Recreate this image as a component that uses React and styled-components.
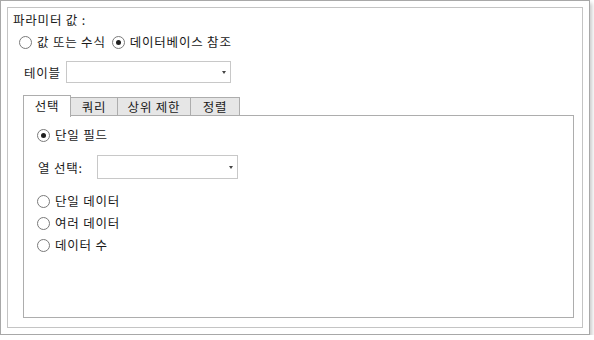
import styled, { createGlobalStyle } from "styled-components";

const GlobalStyle = createGlobalStyle`
  html, body {
    margin: 0;
    padding: 0;
    background: #ffffff;
  }
  body {
    font-family: "Noto Sans CJK KR", "Noto Sans", sans-serif;
    font-size: 12.5px;
    letter-spacing: 0.8px;
    color: #1a1a1a;
  }
  * {
    box-sizing: border-box;
  }
`;

const Window = styled.div`
  width: 590px;
  height: 335px;
  padding: 6px;
  background: #ffffff;
  border: 1px solid #a8a8a8;
  box-shadow: 2px 3px 4px rgba(0, 0, 0, 0.22);
`;

const Group = styled.div`
  height: 100%;
  display: flex;
  flex-direction: column;
  border: 1px solid #c4c4c4;
  padding: 4px 8px 9px 0;
`;

const Title = styled.div`
  height: 16px;
  line-height: 16px;
  margin-left: 5px;
`;

const Row = styled.div`
  display: flex;
  align-items: center;
  height: ${(p) => p.$h || 16}px;
  margin-top: ${(p) => p.$mt || 0}px;
  margin-left: ${(p) => p.$ml || 0}px;
  gap: ${(p) => p.$gap || 0}px;
`;

const RadioLabel = styled.label`
  display: flex;
  align-items: center;
  gap: 5px;
  height: 16px;
  line-height: 16px;
  white-space: nowrap;
`;

const Circle = styled.span`
  position: relative;
  width: 13px;
  height: 13px;
  border-radius: 50%;
  border: 1px solid #7a7a7a;
  background: #ffffff;
  flex: none;

  &::after {
    content: "";
    display: ${(p) => (p.$checked ? "block" : "none")};
    position: absolute;
    left: 3px;
    top: 3px;
    width: 5px;
    height: 5px;
    border-radius: 50%;
    background: #1f1f1f;
  }
`;

const FieldLabel = styled.span`
  width: ${(p) => p.$w}px;
  flex: none;
  white-space: nowrap;
`;

const Select = styled.div`
  position: relative;
  width: ${(p) => p.$w}px;
  height: ${(p) => p.$h}px;
  border: 1px solid #c8c8c8;
  background: #ffffff;

  &::after {
    content: "";
    position: absolute;
    right: 4px;
    top: 50%;
    margin-top: -1px;
    border-left: 2.5px solid transparent;
    border-right: 2.5px solid transparent;
    border-top: 3px solid #444444;
  }
`;

const TabStrip = styled.div`
  display: flex;
  align-items: flex-end;
  margin: 11px 0 0 15px;
  height: 22px;
  position: relative;
  z-index: 1;
`;

const Tab = styled.div`
  width: ${(p) => p.$w}px;
  height: ${(p) => (p.$active ? 22 : 19)}px;
  line-height: ${(p) => (p.$active ? 20 : 17)}px;
  padding-bottom: ${(p) => (p.$active ? 2 : 0)}px;
  text-align: center;
  background: ${(p) => (p.$active ? "#ffffff" : "#e6e6e6")};
  border: 1px solid #adadad;
  border-bottom: ${(p) => (p.$active ? "none" : "1px solid #adadad")};
  margin-left: ${(p) => (p.$first ? 0 : -1)}px;
  margin-bottom: ${(p) => (p.$active ? -1 : 0)}px;
`;

const Panel = styled.div`
  flex: 1;
  margin-left: 15px;
  margin-top: -1px;
  border: 1px solid #adadad;
  padding: 11px 0 0 13px;
  display: flex;
  flex-direction: column;
`;

function Radio({ checked, children }) {
  return (
    <RadioLabel>
      <Circle $checked={checked} />
      {children}
    </RadioLabel>
  );
}

export default function App() {
  return (
    <>
      <GlobalStyle />
      <Window>
        <Group>
          <Title>파라미터 값 :</Title>
          <Row $mt={6} $ml={11} $gap={6}>
            <Radio>값 또는 수식</Radio>
            <Radio checked>데이터베이스 참조</Radio>
          </Row>
          <Row $h={22} $mt={11} $ml={16}>
            <FieldLabel $w={42}>테이블</FieldLabel>
            <Select $w={165} $h={22} />
          </Row>
          <TabStrip>
            <Tab $w={48} $active $first>선택</Tab>
            <Tab $w={48}>쿼리</Tab>
            <Tab $w={74}>상위 제한</Tab>
            <Tab $w={50}>정렬</Tab>
          </TabStrip>
          <Panel>
            <Radio checked>단일 필드</Radio>
            <Row $h={24} $mt={12} $ml={1}>
              <FieldLabel $w={59}>열 선택:</FieldLabel>
              <Select $w={141} $h={24} />
            </Row>
            <Row $mt={14}>
              <Radio>단일 데이터</Radio>
            </Row>
            <Row $mt={6}>
              <Radio>여러 데이터</Radio>
            </Row>
            <Row $mt={6}>
              <Radio>데이터 수</Radio>
            </Row>
          </Panel>
        </Group>
      </Window>
    </>
  );
}
